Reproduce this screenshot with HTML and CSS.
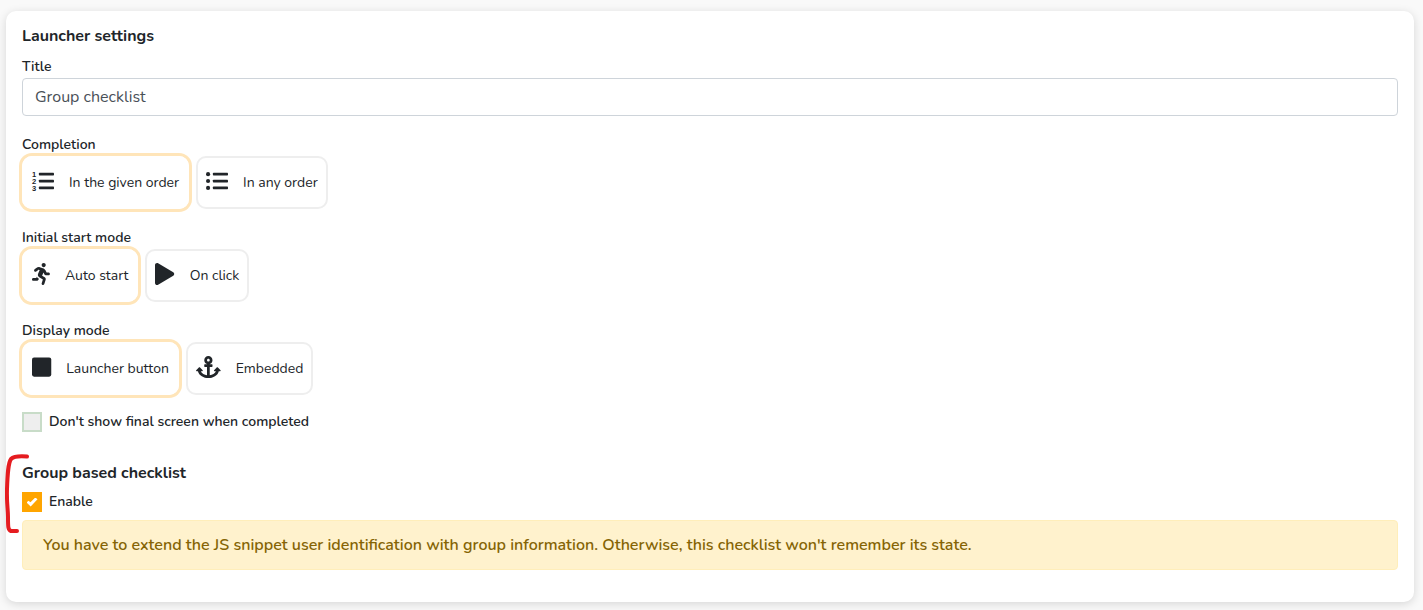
FILE: index.html
```html
<!DOCTYPE html>
<html lang="en">
<head>
    <meta charset="UTF-8">
    <meta name="viewport" content="width=device-width, initial-scale=1.0">
    <title>Launcher settings</title>
    <link rel="stylesheet" href="styles.css">
</head>
<body>
    <form class="card">
        <h2>Launcher settings</h2>
        <div class="field">
            <label class="field-label" for="title">Title</label>
            <input type="text" class="text-input" id="title" name="title" value="Group checklist">
        </div>

        <fieldset class="field">
            <legend class="field-label">Completion</legend>
            <div class="options">
                <label class="option">
                    <input type="radio" name="completion" value="ordered" checked>
                    <svg class="icon" viewBox="0 0 512 512">
                        <text class="num" x="0" y="160">1</text>
                        <text class="num" x="0" y="320">2</text>
                        <text class="num" x="0" y="480">3</text>
                        <rect x="160" y="64" width="352" height="64" rx="16"/>
                        <rect x="160" y="224" width="352" height="64" rx="16"/>
                        <rect x="160" y="384" width="352" height="64" rx="16"/>
                    </svg>
                    <span>In the given order</span>
                </label>
                <label class="option">
                    <input type="radio" name="completion" value="any">
                    <svg class="icon" viewBox="0 0 512 512">
                        <circle cx="48" cy="96" r="48"/>
                        <circle cx="48" cy="256" r="48"/>
                        <circle cx="48" cy="416" r="48"/>
                        <rect x="160" y="64" width="352" height="64" rx="16"/>
                        <rect x="160" y="224" width="352" height="64" rx="16"/>
                        <rect x="160" y="384" width="352" height="64" rx="16"/>
                    </svg>
                    <span>In any order</span>
                </label>
            </div>
        </fieldset>

        <fieldset class="field">
            <legend class="field-label">Initial start mode</legend>
            <div class="options">
                <label class="option">
                    <input type="radio" name="start" value="auto" checked>
                    <svg class="icon" viewBox="0 0 416 512"><path d="M272 96c26.51 0 48-21.49 48-48S298.51 0 272 0s-48 21.49-48 48 21.49 48 48 48zM113.69 317.47l-14.8 34.52H32c-17.67 0-32 14.33-32 32s14.33 32 32 32h77.45c19.25 0 36.58-11.44 44.11-29.09l8.79-20.52-10.67-6.3c-17.32-10.23-30.06-25.37-37.99-42.61zM384 223.99h-44.03l-26.06-53.25c-12.5-25.55-35.45-44.23-61.78-50.94l-71.08-21.14c-28.3-6.8-57.77-.55-80.84 17.14l-39.67 30.41c-14.03 10.75-16.69 30.83-5.92 44.86s30.84 16.66 44.86 5.92l39.69-30.41c7.67-5.89 17.44-8 25.27-6.14l14.7 4.37-37.46 87.39c-12.62 29.48-1.31 64.01 26.3 80.31l84.98 50.17-27.47 87.73c-5.28 16.86 4.11 34.81 20.97 40.09 3.19 1 6.41 1.48 9.58 1.48 13.61 0 26.23-8.77 30.52-22.45l31.64-101.06c5.91-20.77-2.89-43.08-21.64-54.39l-61.24-36.14 31.31-78.28 20.27 41.43c8 16.34 24.92 26.89 43.11 26.89H384c17.67 0 32-14.33 32-32s-14.33-31.99-32-31.99z"/></svg>
                    <span>Auto start</span>
                </label>
                <label class="option">
                    <input type="radio" name="start" value="click">
                    <svg class="icon" viewBox="0 0 448 512"><path d="M424.4 214.7L72.4 6.6C43.8-10.3 0 6.1 0 47.9V464c0 37.5 40.7 60.1 72.4 41.3l352-208c31.4-18.5 31.5-64.1 0-82.6z"/></svg>
                    <span>On click</span>
                </label>
            </div>
        </fieldset>

        <fieldset class="field">
            <legend class="field-label">Display mode</legend>
            <div class="options">
                <label class="option">
                    <input type="radio" name="display" value="launcher" checked>
                    <svg class="icon" viewBox="0 0 448 512"><rect y="32" width="448" height="448" rx="48"/></svg>
                    <span>Launcher button</span>
                </label>
                <label class="option">
                    <input type="radio" name="display" value="embedded">
                    <svg class="icon" viewBox="0 0 576 512"><path d="M12.971 352h32.394C67.172 454.735 181.944 512 288 512c106.229 0 220.853-57.38 242.635-160h32.394c10.691 0 16.045-12.926 8.485-20.485l-67.029-67.029c-4.686-4.686-12.284-4.686-16.971 0l-67.029 67.029c-7.56 7.56-2.206 20.485 8.485 20.485h35.146c-20.29 54.317-84.963 86.588-144.117 94.015V256h52c6.627 0 12-5.373 12-12v-40c0-6.627-5.373-12-12-12h-52v-5.47c37.281-13.226 63.997-48.781 64-90.53C384.005 43.028 341.092.068 288.097 0 234.969-.068 192 42.963 192 96c0 41.758 26.717 77.317 64 90.53V192h-52c-6.627 0-12 5.373-12 12v40c0 6.627 5.373 12 12 12h52v190.015c-58.936-7.399-123.82-39.679-144.117-94.015h35.146c10.691 0 16.045-12.926 8.485-20.485l-67.029-67.029c-4.686-4.686-12.284-4.686-16.971 0L4.485 331.515C-3.074 339.074 2.28 352 12.971 352zM288 64c17.645 0 32 14.355 32 32s-14.355 32-32 32-32-14.355-32-32 14.355-32 32-32z"/></svg>
                    <span>Embedded</span>
                </label>
            </div>
        </fieldset>

        <label class="check">
            <input type="checkbox" name="hideFinal">
            <span>Don't show final screen when completed</span>
        </label>

        <section class="group">
            <svg class="marker" viewBox="0 0 24 80"><path d="M22 3.500C16 3 9 3 6 6C3 10 2.500 22 2 36C1.500 50 3 56 3 64C3 74 3 77 6 78L12 78"/></svg>
            <h2>Group based checklist</h2>
            <label class="check">
                <input type="checkbox" name="groupBased" checked>
                <span>Enable</span>
            </label>
            <div class="alert">You have to extend the JS snippet user identification with group information. Otherwise, this checklist won't remember its state.</div>
        </section>
    </form>
</body>
</html>
```

FILE: styles.css
```css
* {
    box-sizing: border-box;
}
body {
    margin: 0;
    padding: 11px 9px 8px 6px;
    background: #f9f9f9;
    color: #212529;
    font-family: Nunito, Lato, sans-serif;
    font-size: 14px;
    font-weight: 600;
    line-height: 20px;
}
.card {
    padding: 13px 16px 32px;
    background: #fff;
    border-radius: 10px;
    box-shadow: 0 2px 10px rgba(0, 0, 0, 0.14);
}
h2 {
    margin: 0 0 8px;
    font-size: 16px;
    font-weight: 700;
    line-height: 24px;
}
.field {
    margin: 0 0 18px;
    padding: 0;
    border: none;
    min-width: 0;
}
.field-label {
    display: block;
    padding: 0;
    line-height: 22px;
}
.text-input {
    display: block;
    width: 100%;
    height: 38px;
    padding: 6px 12px;
    border: 1px solid #ced4da;
    border-radius: 4px;
    color: #495057;
    font-family: inherit;
    font-size: 16px;
    font-weight: 400;
}

/* Option boxes */
.options {
    display: flex;
    flex-wrap: wrap;
    gap: 7px;
}
.option {
    display: flex;
    align-items: center;
    gap: 15px;
    height: 53px;
    padding: 0 8px;
    border: 2px solid #eee;
    border-radius: 10px;
    font-weight: 400;
    cursor: pointer;
}
.option input {
    position: absolute;
    opacity: 0;
    pointer-events: none;
}
.option:has(input:checked) {
    border-color: #fff;
    box-shadow: 0 0 0 3px #ffe5b9;
}
.icon {
    height: 22px;
    margin-bottom: 4px;
    fill: #212529;
    overflow: visible;
}
.num {
    font-family: "Liberation Sans", sans-serif;
    font-size: 176px;
    font-weight: bold;
}

/* Checkboxes */
.check {
    display: flex;
    align-items: center;
    gap: 7px;
    margin-top: -1px;
}
.check input {
    appearance: none;
    width: 20px;
    height: 20px;
    margin: 0;
    border: 2px solid #c8dcc8;
    background: #eee;
}
.check input:checked {
    display: grid;
    place-items: center;
    border-color: orange;
    background: orange;
}
.check input:checked::before {
    content: "";
    width: 11px;
    height: 9px;
    background: #fff;
    clip-path: polygon(0 56%, 18% 36%, 36% 54%, 80% 0, 100% 20%, 38% 100%);
}

.group {
    position: relative;
    margin-top: 29px;
}
.marker {
    position: absolute;
    top: -8px;
    left: -17px;
    width: 24px;
    height: 80px;
    fill: none;
    stroke: #e51c20;
    stroke-width: 4;
    stroke-linecap: round;
    stroke-linejoin: round;
}
.alert {
    margin-top: 8px;
    padding: 12px 20px;
    border: 1px solid #ffeeba;
    border-radius: 4px;
    background: #fff2cd;
    color: #856404;
    font-size: 16px;
    line-height: 24px;
}
```
